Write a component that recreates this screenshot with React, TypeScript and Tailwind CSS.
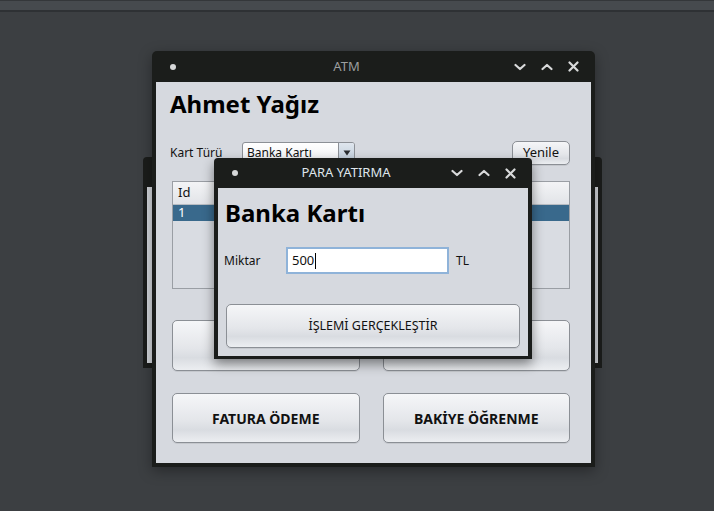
const font = { fontFamily: '"Noto Sans", "Open Sans", sans-serif' };

function TitleIcons() {
  return (
    <div className="flex items-center gap-[15px]">
      <svg width="12" height="8" viewBox="0 0 12 8" fill="none" stroke="#d9dadb" strokeWidth="2.2" strokeLinecap="round" strokeLinejoin="round">
        <path d="M1.5 2 L6 6 L10.5 2" />
      </svg>
      <svg width="12" height="8" viewBox="0 0 12 8" fill="none" stroke="#d9dadb" strokeWidth="2.2" strokeLinecap="round" strokeLinejoin="round">
        <path d="M1.5 6 L6 2 L10.5 6" />
      </svg>
      <svg width="11" height="11" viewBox="0 0 11 11" fill="none" stroke="#d9dadb" strokeWidth="2.2" strokeLinecap="round">
        <path d="M1.5 1.5 L9.5 9.5 M9.5 1.5 L1.5 9.5" />
      </svg>
    </div>
  );
}

function TitleBar({ title, light, height }: { title: string; light?: boolean; height: string }) {
  return (
    <div className={`relative flex items-center ${height} pl-[18px] pr-[16px]`}>
      <div className="h-[6px] w-[6px] rounded-full bg-[#d6d7d8]" />
      <span
        className={`absolute left-0 right-[54px] text-center text-[13px] ${light ? "text-[#dfe5ec]" : "text-[#9c9e9f]"}`}
        style={font}
      >
        {title}
      </span>
      <div className="ml-auto">
        <TitleIcons />
      </div>
    </div>
  );
}

const btn =
  "rounded-[5px] border border-[#8b8f95] bg-[linear-gradient(to_bottom,#f5f6f8,#e4e6ea_55%,#d9dce1_75%,#eceef1)] shadow-[0_1px_0_rgba(0,0,0,0.08)]";

export default function App() {
  return (
    <div className="relative h-[511px] w-[714px] overflow-hidden bg-[#3c3f42]" style={font}>
      {/* top panel */}
      <div className="h-[12px] border-t border-[#34373a] border-b-2 border-b-[#2e3134] bg-[#464a4e]" />

      {/* window hidden behind ATM */}
      <div className="absolute left-[143px] top-[157px] flex h-[211px] w-[459px] flex-col rounded-t-[4px] bg-[#1b1d1b] px-[4px] pb-[5px]">
        <div className="h-[30px]" />
        <div className="flex-1 bg-[#d3d6db]" />
      </div>

      {/* ATM window */}
      <div className="absolute left-[152px] top-[51px] flex h-[416px] w-[443px] flex-col rounded-t-[5px] bg-[#1b1d1b] shadow-[0_4px_14px_rgba(0,0,0,0.35)]">
        <TitleBar title="ATM" height="h-[31px]" />
        <div className="mx-[4px] mb-[4px] flex flex-1 flex-col bg-[#d6d9df] pl-[16px] pr-[21px] pt-[7px] text-black">
          <h1 className="-ml-[2px] text-[24px] font-bold leading-[30px]">Ahmet Yağız</h1>

          <div className="mt-[22px] flex h-[24px] items-center">
            <span className="-ml-[2px] w-[72px] text-[12px] text-[#111]">Kart Türü</span>
            <div className="flex h-[22px] w-[113px] overflow-hidden rounded-[3px] border border-[#8c9096] bg-[linear-gradient(to_bottom,#ffffff,#eef0f3)]">
              <span className="flex-1 pl-[4px] text-[12px] leading-[20px] text-[#111]">Banka Kartı</span>
              <div className="flex w-[16px] items-center justify-center border-l border-[#8c9096] bg-[linear-gradient(to_bottom,#dfe6ee,#bccad8)]">
                <svg width="8" height="6" viewBox="0 0 8 6">
                  <path d="M0.5 0.5 L7.5 0.5 L4 5.5 Z" fill="#2a2d30" />
                </svg>
              </div>
            </div>
            <button className={`ml-auto h-[24px] w-[58px] text-[13px] text-[#111] ${btn}`}>Yenile</button>
          </div>

          <div className="mt-[16px] h-[108px] border border-[#9a9ea4] bg-[#d9dce2]">
            <div className="flex h-[23px] items-center border-b border-[#b8bcc2] bg-[linear-gradient(to_bottom,#f3f4f6,#e2e4e8)] pl-[5px] text-[13px] text-[#111]">
              Id
            </div>
            <div className="flex h-[16px] items-center bg-[#39698c] pl-[5px] text-[13px] text-white">1</div>
          </div>

          <div className="mt-[31px] grid grid-cols-2 gap-x-[23px] gap-y-[22px]">
            <button className={`h-[51px] ${btn}`} />
            <button className={`h-[51px] ${btn}`} />
            <button className={`h-[50px] text-[14px] font-bold text-[#111] ${btn}`}>FATURA ÖDEME</button>
            <button className={`h-[50px] text-[14px] font-bold text-[#111] ${btn}`}>BAKİYE ÖĞRENME</button>
          </div>
        </div>
      </div>

      {/* PARA YATIRMA dialog */}
      <div className="absolute left-[214px] top-[158px] flex h-[201px] w-[318px] flex-col rounded-t-[4px] bg-[#1b1d1b] shadow-[0_5px_12px_rgba(0,0,0,0.45)]">
        <TitleBar title="PARA YATIRMA" light height="h-[30px]" />
        <div className="mx-[4px] mb-[3px] flex flex-1 flex-col bg-[#d6d9df] pl-[7px] pt-[10px] text-black">
          <h2 className="text-[24px] font-bold leading-[30px]">Banka Kartı</h2>
          <div className="mt-[19px] flex items-center">
            <span className="-ml-[1px] w-[62px] text-[12px] text-[#111]">Miktar</span>
            <div className="flex h-[27px] w-[163px] items-center border-2 border-[#8fb3d9] bg-white pl-[4px] text-[13px] text-[#111]">
              500
              <span className="ml-[1px] h-[16px] w-px bg-black" />
            </div>
            <span className="ml-[7px] text-[12px] text-[#111]">TL</span>
          </div>
          <button className={`ml-[1px] mt-[30px] h-[44px] w-[294px] text-[12.5px] text-[#111] ${btn}`}>
            İŞLEMİ GERÇEKLEŞTİR
          </button>
        </div>
      </div>
    </div>
  );
}
